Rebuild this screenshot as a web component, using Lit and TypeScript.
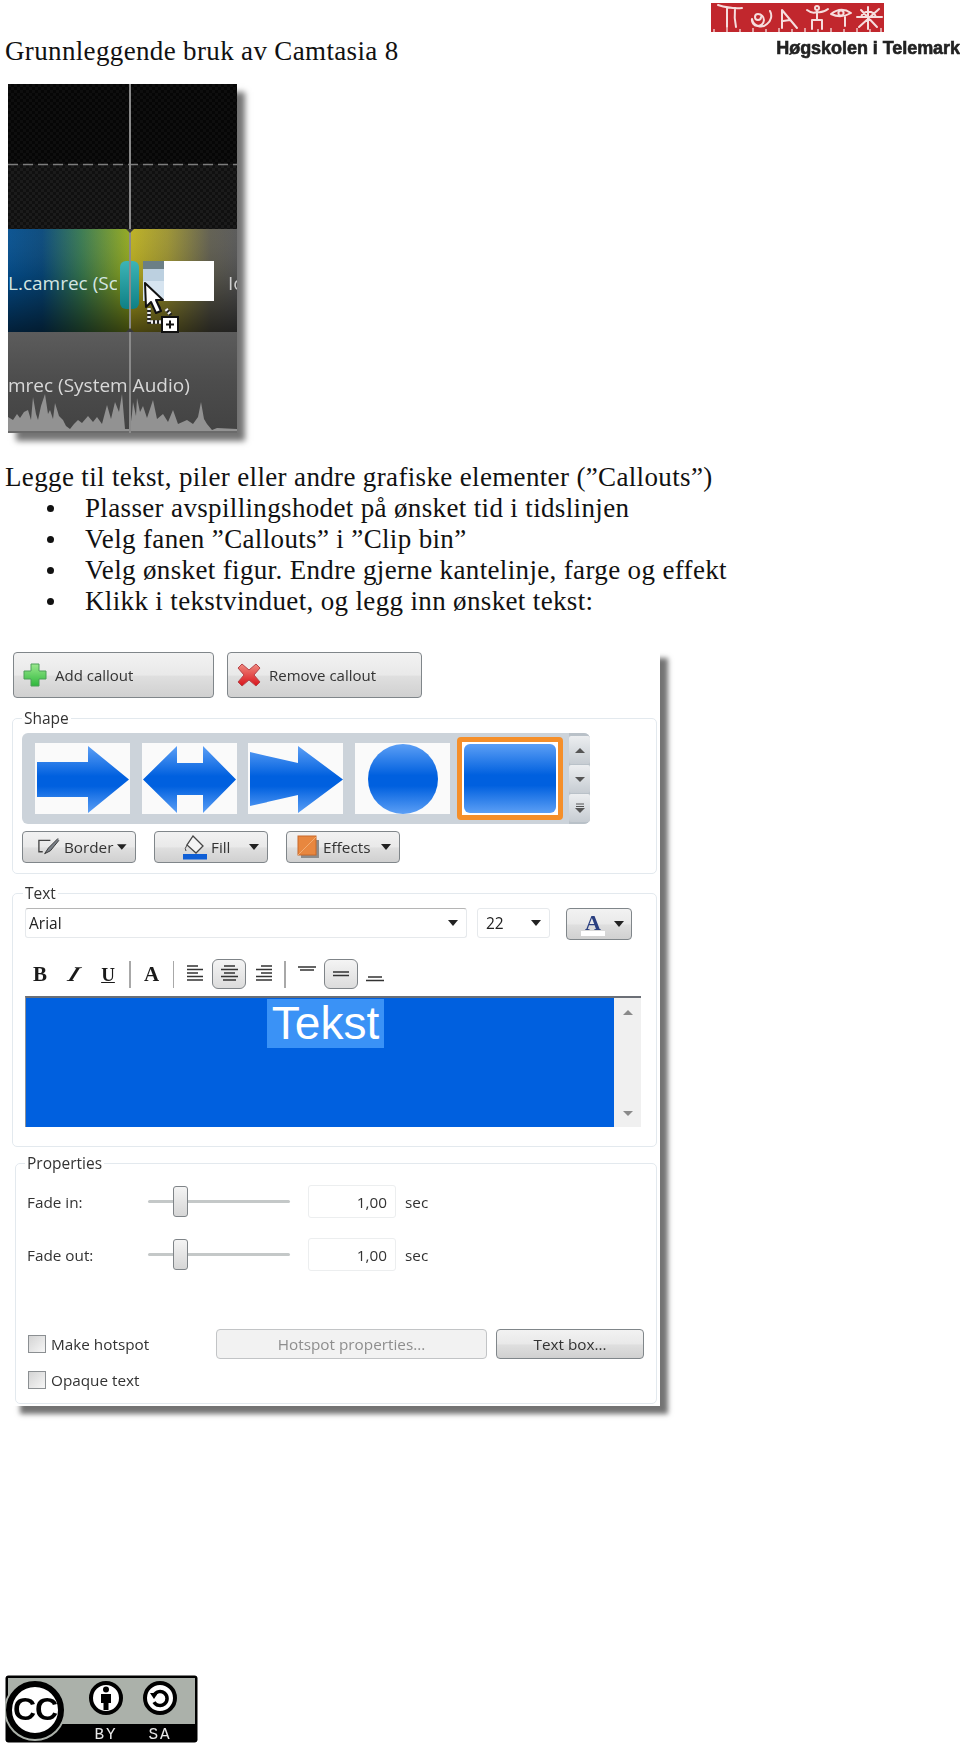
import { LitElement, html, css } from "lit";
import { customElement } from "lit/decorators.js";

const caret = html`<svg class="caret" width="10" height="6" viewBox="0 0 10 6"><path d="M0 0H10L5 6Z" fill="#222"/></svg>`;

@customElement("app-root")
export class AppRoot extends LitElement {
  static styles = css`
    :host { display: block; width: 960px; height: 1745px; background: #fff; overflow: hidden; color: #111; }
    .page { display: flex; flex-direction: column; height: 1745px; font-family: "Liberation Serif", serif; }
    .head { display: flex; justify-content: space-between; height: 84px; }
    h1 { margin: 36px 0 0 5px; font-weight: 400; font-size: 27px; line-height: 30px; letter-spacing: .35px; white-space: nowrap; }
    .logo { display: flex; flex-direction: column; align-items: flex-end; padding-top: 3px; }
    .logo svg { display: block; margin-right: 76px; filter: blur(.4px); }
    .logo span { font: 700 18px/20px "Liberation Sans", sans-serif; color: #222; -webkit-text-stroke: .6px #222; margin-top: 6px; letter-spacing: -.05px; white-space: nowrap; filter: blur(.4px); }
    .timeline { display: block; margin: 0 0 0 8px; width: 229px; height: 349px; box-shadow: 8px 8px 6px rgba(0,0,0,.55); }
    .timeline svg { display: block; filter: blur(.4px); }
    .copy { margin: 29px 0 0 5px; font-size: 27px; line-height: 31px; letter-spacing: .35px; white-space: nowrap; }
    .copy p { margin: 0; }
    ul { margin: 0; padding: 0 0 0 80px; list-style: none; }
    li { position: relative; }
    li::before { content: ""; position: absolute; left: -38.5px; top: 12px; width: 7px; height: 7px; border-radius: 50%; background: #111; }
    .panel { margin: 33px 0 0 12px; width: 648px; height: 756px; background: #fff; box-shadow: 8px 8px 5px rgba(0,0,0,.55); font: 15.3px/18px "Open Sans", sans-serif; color: #333; padding-top: 2px; box-sizing: border-box; filter: blur(.3px); }
    .top { display: flex; gap: 13px; margin-left: 1px; }
    .btn { box-sizing: border-box; display: flex; align-items: center; border: 1.5px solid #80868a; border-radius: 4px; background: linear-gradient(#f2f2f2 0, #e9e9e9 50%, #dfdfdf 53%, #d0d0d0 100%); color: #333; white-space: nowrap; }
    .big { height: 46px; padding-left: 8px; gap: 7px; font-size: 15px; }
    .add { width: 201px; }
    .rem { width: 195px; }
    fieldset { margin: 0; padding: 0; border: 1.5px solid #e3e9ee; border-radius: 5px; min-width: 0; box-sizing: border-box; }
    legend { padding: 0 2px; line-height: 18px; color: #333; font-size: 15.5px; }
    .shape { width: 645px; margin-top: 11px; padding: 6px 10px 10px 9px; }
    .shape legend { margin-left: 0; }
    .gallery { box-sizing: border-box; width: 568px; height: 91px; background: #ccd3da; border-radius: 6px; display: flex; align-items: center; padding-left: 13px; gap: 11.7px; }
    .item { width: 95px; height: 71px; background: #fafafa; display: block; flex: none; }
    .sel { box-sizing: border-box; flex: none; width: 106px; height: 83px; margin-left: -5px; margin-right: -5px; border: 5px solid #f58f2a; border-radius: 4px; background: #fff; padding: 2px; }
    .sel div { height: 100%; border-radius: 6px; background: linear-gradient(#5c9ff5, #0060df 45%, #0060df 60%, #5c9ff5); }
    .scroll { margin-left: auto; width: 21px; height: 91px; display: flex; flex-direction: column; background: #b9c1c8; border-radius: 0 6px 6px 0; padding: 3px 0 2px; box-sizing: border-box; gap: 1px; }
    .scroll div { flex: 1; display: flex; align-items: center; justify-content: center; background: linear-gradient(#eceef0, #c6ccd2); border-radius: 2px; }
    .tools { display: flex; margin-top: 7px; }
    .sm { height: 32px; width: 114px; padding: 0 8px 0 14px; box-sizing: border-box; gap: 4px; }
    .sm .caret { margin-left: auto; }
    .fill { margin-left: 18px; }
    .eff { margin-left: 18px; padding-left: 10px; }
    .text { width: 645px; margin-top: 10px; padding: 6px 0 19px 12px; }
    .text legend { margin-left: -2px; }
    .fonts { display: flex; align-items: flex-start; }
    .combo { box-sizing: border-box; height: 30px; border: 1.5px solid #e6e9ec; border-top-color: #b5b5b5; border-radius: 3px; display: flex; align-items: center; padding: 0 8px 0 3px; font-size: 15.5px; color: #222; }
    .combo .caret { margin-left: auto; }
    .font { width: 442px; }
    .size { width: 73px; margin-left: 10px; padding-left: 8px; border-top-color: #e6e9ec; }
    .color { width: 66px; height: 32px; margin-left: 16px; padding: 0 7px 0 14px; box-sizing: border-box; }
    .color b { font: 700 22px/20px "Liberation Serif", serif; color: #2a3f80; display: flex; flex-direction: column; align-items: center; width: 24px; }
    .color i { display: block; width: 24px; height: 5px; background: #fff; margin-top: -2px; }
    .color .caret { margin-left: auto; }
    .bar { display: flex; align-items: center; height: 30px; margin: 19px 0 0 -2px; }
    .tb { box-sizing: border-box; flex: none; width: 34px; height: 30px; display: flex; align-items: center; justify-content: center; color: #222; }
    .tb.on { border: 1.5px solid #7f8488; border-radius: 6px; background: linear-gradient(#f4f4f4, #dcdcdc); }
    .tb.glyph { font: 700 21px/1 "Liberation Serif", serif; color: #1a1a1a; }
    .tb.it span { display: block; transform: skewX(-32deg) scaleX(1.05); }
    .tb.un { text-decoration: underline; font-size: 19px; }
    .sep { flex: none; width: 1.5px; height: 27px; background: #a8a8a8; margin: 0 4px; }
    .edit { display: flex; margin-top: 7px; width: 616px; height: 131px; }
    .area { flex: 1; background: #0060df; border-top: 2px solid #6b6f76; border-left: 1.5px solid #8a9099; box-sizing: border-box; display: flex; justify-content: center; }
    .area span { display: block; height: 49px; margin: 1px 0 0 11px; padding: 0 5px; background: #3a92f6; color: #fff; font: 46px/49px "Liberation Sans", sans-serif; }
    .sb { flex: none; width: 27px; background: #f0f0f0; display: flex; flex-direction: column; justify-content: space-between; align-items: center; padding: 12px 0 11px; box-sizing: border-box; border-top: 2px solid #6b6f76; }
    .props { margin: 7px 0 0 3px; width: 642px; padding: 13px 0 14px 11px; }
    .props legend { margin-left: -2px; }
    .row { display: grid; grid-template-columns: 121px 142px 106px auto; align-items: center; height: 33px; }
    .row + .row { margin-top: 20px; }
    .slider { position: relative; height: 33px; display: flex; align-items: center; }
    .slider::before { content: ""; flex: 1; height: 3px; background: #c4c8c8; border-radius: 2px; }
    .thumb { position: absolute; left: 25px; top: 1px; box-sizing: border-box; width: 15px; height: 31px; border: 1.5px solid #7f8488; border-radius: 3px; background: linear-gradient(#f4f4f4, #d6d6d6); }
    .input { box-sizing: border-box; height: 33px; margin-left: 18px; width: 88px; border: 1.5px solid #eceeef; border-radius: 3px; display: flex; align-items: center; justify-content: flex-end; padding-right: 8px; }
    .sec { margin-left: 9px; }
    .checks { display: flex; align-items: center; margin-top: 58px; height: 30px; }
    .check { display: flex; align-items: center; gap: 5px; width: 189px; }
    .box { box-sizing: border-box; width: 18px; height: 18px; margin-left: 1px; border: 1.5px solid #8b8f92; background: linear-gradient(135deg, #d4d4d4, #f6f6f6); }
    .wide { height: 30px; justify-content: center; }
    .off { width: 271px; background: #f2f2f2; border-color: #c2c4c6; color: #8e8e8e; }
    .tx { width: 148px; margin-left: 9px; }
    .opaque { margin-top: 12px; height: 18px; }
    .foot { margin: auto 0 2px 5px; width: 193px; height: 68px; filter: blur(.4px); display: block; }
    .foot text { font-family: "Liberation Mono", monospace; }
  `;

  render() {
    return html`<div class="page">
      <header class="head">
        <h1>Grunnleggende bruk av Camtasia 8</h1>
        <div class="logo">
          <svg width="173" height="29" viewBox="0 0 173 29">
            <rect width="173" height="29" fill="#c1272d"/>
            <g fill="none" stroke="#f6dede" stroke-width="2" stroke-linecap="round" stroke-linejoin="round">
              <path d="M7 2Q20 6 31 5M16 5V24M24 5Q23 15 25 24"/>
              <path d="M50 14a3 3 0 1 1-3-3 6 6 0 1 1-6 5 9 9 0 0 0 15 5 10 10 0 0 0 3-13"/>
              <path d="M71 25V7L86 25M72 18L79 17"/>
              <circle cx="106" cy="5" r="2"/>
              <path d="M96 7Q101 11 106 9Q112 10 117 6M106 8V17M101 26V17H111V26"/>
              <path d="M120 11Q130 3 140 10Q130 16 120 11Z"/>
              <circle cx="130" cy="10" r="2.6"/>
              <path d="M134 14V23"/>
              <path d="M148 24L168 6M150 7L166 24M146 14H171M157 4V26M150 14A8 8 0 0 1 165 14"/>
            </g>
            <path d="M3 29V26M16 29V25M29 29V26M42 29V25M55 29V26M68 29V25M81 29V26M94 29V25M107 29V26M120 29V25M133 29V26M146 29V25M159 29V26M170 29V25" stroke="#f6dede" stroke-width="1.3"/>
          </svg>
          <span>Høgskolen i Telemark</span>
        </div>
      </header>

      <figure class="timeline">
        <svg width="229" height="349" viewBox="0 0 229 349">
          <defs>
            <pattern id="chk" width="6" height="6" patternUnits="userSpaceOnUse"><rect width="6" height="6" fill="#060606"/><rect width="3" height="3" fill="#0e0e0e"/><rect x="3" y="3" width="3" height="3" fill="#0e0e0e"/></pattern>
            <pattern id="chk2" width="6" height="6" patternUnits="userSpaceOnUse"><rect width="6" height="6" fill="#101010"/><rect width="3" height="3" fill="#1b1b1b"/><rect x="3" y="3" width="3" height="3" fill="#1b1b1b"/></pattern>
            <linearGradient id="tl"><stop offset="0" stop-color="#044f8f"/><stop offset=".28" stop-color="#07477a"/><stop offset=".6" stop-color="#36774f"/><stop offset="1" stop-color="#93a81c"/></linearGradient>
            <linearGradient id="tr"><stop offset="0" stop-color="#bcb01f"/><stop offset=".35" stop-color="#9b9230"/><stop offset=".75" stop-color="#5e5c4e"/><stop offset="1" stop-color="#565656"/></linearGradient>
            <linearGradient id="ov" x2="0" y2="1"><stop offset="0" stop-color="#fff" stop-opacity=".04"/><stop offset=".45" stop-color="#000" stop-opacity=".1"/><stop offset="1" stop-color="#000" stop-opacity=".6"/></linearGradient>
            <linearGradient id="au" x2="0" y2="1"><stop offset="0" stop-color="#5c5c5c"/><stop offset=".5" stop-color="#4c4c4c"/><stop offset="1" stop-color="#424242"/></linearGradient>
            <linearGradient id="hd" x2="0" y2="1"><stop offset="0" stop-color="#3db4b6"/><stop offset="1" stop-color="#0f8085"/></linearGradient>
            <clipPath id="c1"><rect width="109" height="100" y="145"/></clipPath>
          </defs>
          <rect width="229" height="80" fill="url(#chk)"/>
          <rect y="80" width="229" height="65" fill="url(#chk2)"/>
          <path d="M0 80.5H229" stroke="#7c7c7c" stroke-width="1.5" stroke-dasharray="10 5"/>
          <rect y="145" width="122" height="103" fill="url(#tl)"/>
          <rect x="122" y="145" width="107" height="103" fill="url(#tr)"/>
          <rect y="145" width="229" height="103" fill="url(#ov)"/>
          <text x="0" y="206" clip-path="url(#c1)" font-family="Open Sans" font-size="19" fill="#d4e6e2">L.camrec (Sc</text>
          <text x="220" y="206" font-family="Open Sans" font-size="19" fill="#cfcfcf">Io</text>
          <rect x="112" y="177" width="19" height="48" rx="6" fill="url(#hd)"/>
          <rect x="135" y="177" width="71" height="40" fill="#fff"/>
          <rect x="135" y="177" width="21" height="8" fill="#6b7f86"/>
          <rect x="135" y="185" width="21" height="12" fill="#bcd0e0"/>
          <rect x="135" y="197" width="21" height="20" fill="#d6e4f0"/>
          <rect y="248" width="229" height="101" fill="url(#au)"/>
          <text x="0" y="308" font-family="Open Sans" font-size="19" fill="#d8d8d8">mrec (System Audio)</text>
          <path d="M0 347V333L5 336L9 330L12 334L16 328L20 326L23 336L25 313L28 330L30 336L33 322L37 310L40 330L42 326L45 335L47 319L51 332L55 336L58 342L62 345L66 340L70 336L74 339L80 332L85 338L89 333L94 340L99 321L103 335L107 318L111 328L114 310L117 345L122 345L124 330L125 318L128 332L129 314L132 328L135 322L139 334L145 316L149 335L155 330L160 338L165 326L170 340L179 336L185 340L190 333L193 318L196 335L199 340L204 346L209 344L229 345V347Z" fill="#929292"/>
          <path d="M0 348H229" stroke="#6a6a6a" stroke-width="2"/>
          <path d="M122 0V349" stroke="#8a8a8a" stroke-width="2"/>
          <path d="M118 145L122 149L126 145Z M118 248L122 244L126 248Z" fill="#3a3a3a"/>
          <path d="M141 224V238H153M146 226L152 222M158 225L163 231" fill="none" stroke="#222" stroke-width="3.5"/>
          <path d="M141 224V238H153M146 226L152 222M158 225L163 231" fill="none" stroke="#eee" stroke-width="3.5" stroke-dasharray="2 2"/>
          <path d="M137 199L138 223L143 218L148 229L153 227L148 216L155 216Z" fill="#fff" stroke="#111" stroke-width="2" stroke-linejoin="round"/>
          <rect x="154" y="233" width="16" height="15" fill="#fff" stroke="#111" stroke-width="2"/>
          <path d="M158 240.5H166M162 236.5V244.5" stroke="#111" stroke-width="2"/>
        </svg>
      </figure>

      <section class="copy">
        <p>Legge til tekst, piler eller andre grafiske elementer (”Callouts”)</p>
        <ul>
          <li>Plasser avspillingshodet på ønsket tid i tidslinjen</li>
          <li>Velg fanen ”Callouts” i ”Clip bin”</li>
          <li>Velg ønsket figur. Endre gjerne kantelinje, farge og effekt</li>
          <li>Klikk i tekstvinduet, og legg inn ønsket tekst:</li>
        </ul>
      </section>

      <section class="panel">
        <div class="top">
          <div class="btn big add">
            <svg width="26" height="26" viewBox="0 0 26 26"><defs><linearGradient id="g" x2="0" y2="1"><stop offset="0" stop-color="#9be88e"/><stop offset="1" stop-color="#2eb83c"/></linearGradient></defs><path d="M9 2H17V9H24V17H17V24H9V17H2V9H9Z" fill="url(#g)" stroke="#4c9f58" stroke-width="1" stroke-linejoin="round"/></svg>
            <span>Add callout</span>
          </div>
          <div class="btn big rem">
            <svg width="26" height="26" viewBox="0 0 26 26"><defs><linearGradient id="r" x2="0" y2="1"><stop offset="0" stop-color="#f08a80"/><stop offset="1" stop-color="#d8141c"/></linearGradient></defs><path d="M2 6L6 2L13 8L20 2L24 6L18 13L24 20L20 24L13 18L6 24L2 20L8 13Z" fill="url(#r)" stroke="#b5454a" stroke-width="1" stroke-linejoin="round"/></svg>
            <span>Remove callout</span>
          </div>
        </div>

        <fieldset class="shape">
          <legend>Shape</legend>
          <div class="gallery">
            <svg class="item" viewBox="0 0 95 71"><defs><linearGradient id="b1" x2="0" y2="1"><stop offset="0" stop-color="#5c9ff5"/><stop offset=".45" stop-color="#0060df"/><stop offset=".6" stop-color="#0060df"/><stop offset="1" stop-color="#5c9ff5"/></linearGradient></defs><path d="M2 19H53V3L94 36.5L53 70V54H2Z" fill="url(#b1)"/></svg>
            <svg class="item" viewBox="0 0 95 71"><defs><linearGradient id="b2" x2="0" y2="1"><stop offset="0" stop-color="#5c9ff5"/><stop offset=".45" stop-color="#0060df"/><stop offset=".6" stop-color="#0060df"/><stop offset="1" stop-color="#5c9ff5"/></linearGradient></defs><path d="M1 36.5L35 3V20H61V3L94 36.5L61 70V52H35V70Z" fill="url(#b2)"/></svg>
            <svg class="item" viewBox="0 0 95 71"><defs><linearGradient id="b3" x2="0" y2="1"><stop offset="0" stop-color="#5c9ff5"/><stop offset=".45" stop-color="#0060df"/><stop offset=".6" stop-color="#0060df"/><stop offset="1" stop-color="#5c9ff5"/></linearGradient></defs><path d="M2 9L50 20V3L95 36.5L50 70V52L2 63Z" fill="url(#b3)"/></svg>
            <svg class="item" viewBox="0 0 95 71"><defs><linearGradient id="b4" x2="0" y2="1"><stop offset="0" stop-color="#5c9ff5"/><stop offset=".45" stop-color="#0060df"/><stop offset=".6" stop-color="#0060df"/><stop offset="1" stop-color="#5c9ff5"/></linearGradient></defs><circle cx="48" cy="36" r="35" fill="url(#b4)"/></svg>
            <div class="sel"><div></div></div>
            <div class="scroll">
              <div><svg width="10" height="5" viewBox="0 0 10 5"><path d="M0 5L5 0L10 5Z" fill="#555"/></svg></div>
              <div><svg width="10" height="5" viewBox="0 0 10 5"><path d="M0 0L5 5L10 0Z" fill="#555"/></svg></div>
              <div><svg width="10" height="10" viewBox="0 0 10 10"><path d="M1 1H9M1 3.5H9" stroke="#555"/><path d="M0 5H10L5 10Z" fill="#555"/></svg></div>
            </div>
          </div>
          <div class="tools">
            <div class="btn sm">
              <svg width="24" height="22" viewBox="0 0 24 22"><path d="M14 4H2V16H6" fill="none" stroke="#444" stroke-width="1.4"/><path d="M22 2L12 12L8 18L14 15L23 4" fill="#7a8088" stroke="#333"/></svg>
              <span>Border</span>${caret}
            </div>
            <div class="btn sm fill">
              <svg style="margin-left:14px" width="24" height="26" viewBox="0 0 24 26"><path d="M10 2L20 12L13 19L4 11Z" fill="#f4f4f4" stroke="#444" stroke-width="1.3"/><path d="M4 11Q1 15 3 17" fill="none" stroke="#444"/><rect y="20" width="24" height="5.5" fill="#0f5fd6"/></svg>
              <span>Fill</span>${caret}
            </div>
            <div class="btn sm eff">
              <svg width="22" height="26" viewBox="0 0 22 26"><rect x="4" y="6" width="18" height="18" fill="#8c8c8c"/><rect x="1" y="2" width="18" height="19" fill="#e8873f" stroke="#c8682a"/><path d="M1 21L19 3" stroke="#f2ac72" stroke-width="1"/></svg>
              <span>Effects</span>${caret}
            </div>
          </div>
        </fieldset>

        <fieldset class="text">
          <legend>Text</legend>
          <div class="fonts">
            <div class="combo font"><span>Arial</span>${caret}</div>
            <div class="combo size"><span>22</span>${caret}</div>
            <div class="btn color"><b>A<i></i></b>${caret}</div>
          </div>
          <div class="bar">
            <div class="tb glyph">B</div>
            <div class="tb glyph it"><span>I</span></div>
            <div class="tb glyph un">U</div>
            <div class="sep"></div>
            <div class="tb glyph">A</div>
            <div class="sep"></div>
            <div class="tb"><svg width="17" height="18" viewBox="0 0 17 18"><path d="M0 1H11M0 4.5H16M0 8H11M0 11.5H16M0 15H16" stroke="#333" stroke-width="1.5"/></svg></div>
            <div class="tb on"><svg width="17" height="18" viewBox="0 0 17 18"><path d="M3 1H14M0 4.5H17M3 8H14M0 11.5H17M2 15H15" stroke="#333" stroke-width="1.5"/></svg></div>
            <div class="tb"><svg width="17" height="18" viewBox="0 0 17 18"><path d="M6 1H17M1 4.5H17M6 8H17M1 11.5H17M1 15H17" stroke="#333" stroke-width="1.5"/></svg></div>
            <div class="sep"></div>
            <div class="tb"><svg width="18" height="18" viewBox="0 0 18 18"><path d="M0 2H18M2 5H16" stroke="#333" stroke-width="1.5"/></svg></div>
            <div class="tb on"><svg width="18" height="18" viewBox="0 0 18 18"><path d="M1 7H17M1 10.5H17" stroke="#333" stroke-width="1.5"/></svg></div>
            <div class="tb"><svg width="18" height="18" viewBox="0 0 18 18"><path d="M2 12H16M0 15.5H18" stroke="#333" stroke-width="1.5"/></svg></div>
          </div>
          <div class="edit">
            <div class="area"><span>Tekst</span></div>
            <div class="sb">
              <svg width="10" height="5" viewBox="0 0 10 5"><path d="M0 5L5 0L10 5Z" fill="#8a8a8a"/></svg>
              <svg width="10" height="5" viewBox="0 0 10 5"><path d="M0 0L5 5L10 0Z" fill="#8a8a8a"/></svg>
            </div>
          </div>
        </fieldset>

        <fieldset class="props">
          <legend>Properties</legend>
          <div class="row">
            <span>Fade in:</span>
            <div class="slider"><div class="thumb"></div></div>
            <div class="input">1,00</div>
            <span class="sec">sec</span>
          </div>
          <div class="row">
            <span>Fade out:</span>
            <div class="slider"><div class="thumb"></div></div>
            <div class="input">1,00</div>
            <span class="sec">sec</span>
          </div>
          <div class="checks">
            <div class="check"><div class="box"></div><span>Make hotspot</span></div>
            <div class="btn wide off">Hotspot properties...</div>
            <div class="btn wide tx">Text box...</div>
          </div>
          <div class="check opaque"><div class="box"></div><span>Opaque text</span></div>
        </fieldset>
      </section>

      <svg class="foot" viewBox="0 0 193 68">
        <rect x=".5" y=".5" width="192" height="67" rx="3" fill="#000"/>
        <rect x="3" y="3" width="187" height="46" fill="#abb1aa"/>
        <circle cx="30" cy="35" r="31" fill="#abb1aa"/>
        <circle cx="30" cy="35" r="26" fill="#fff" stroke="#000" stroke-width="6"/>
        <text x="30" y="45" text-anchor="middle" style="font-family:'Liberation Sans',sans-serif;font-weight:700;font-size:32px;letter-spacing:-1px" fill="#000">CC</text>
        <circle cx="101" cy="23" r="15" fill="#fff" stroke="#000" stroke-width="4"/>
        <circle cx="101" cy="14.5" r="3" fill="#000"/>
        <path d="M96 19H106V28H103.5V35H98.5V28H96Z" fill="#000"/>
        <circle cx="155" cy="23" r="15" fill="#fff" stroke="#000" stroke-width="4"/>
        <path d="M149 20A7 7 0 1 1 149 27" fill="none" stroke="#000" stroke-width="3.5"/>
        <path d="M145 18H153L149 24Z" fill="#000"/>
        <text x="101" y="64" text-anchor="middle" font-size="16" letter-spacing="2" fill="#e8e8e8">BY</text>
        <text x="155" y="64" text-anchor="middle" font-size="16" letter-spacing="2" fill="#e8e8e8">SA</text>
      </svg>
    </div>`;
  }
}
